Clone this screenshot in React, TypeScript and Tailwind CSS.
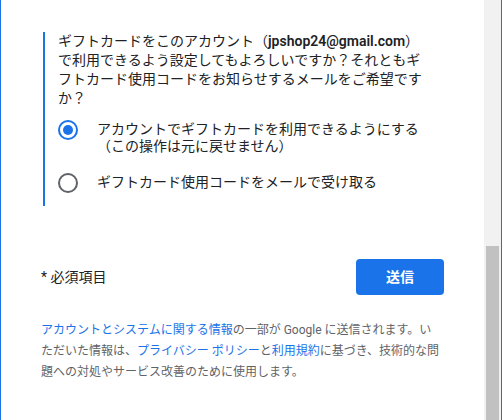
import { useState } from "react";

const font = "font-['Roboto','Noto_Sans_CJK_JP',sans-serif]";

export default function App() {
  const [choice, setChoice] = useState<string>("account");

  const options = [
    {
      key: "account",
      label: "アカウントでギフトカードを利用できるようにする",
      sub: "（この操作は元に戻せません）",
    },
    { key: "mail", label: "ギフトカード使用コードをメールで受け取る", sub: "" },
  ];

  return (
    <div className={`h-[420px] w-[502px] flex overflow-hidden border-x border-[#1a73e8] bg-white ${font}`}>
      {/* Form body */}
      <div className="flex-1 px-10 pt-8">
        {/* Question */}
        <div className="ml-[2px] border-l-2 border-[#1a73e8] pl-[13px] pr-[20px] pb-[13px]">
          <p className="text-[14px] leading-[19px] text-[#202124]">
            ギフトカードをこのアカウント（<span className="font-semibold">jpshop24@gmail.com</span>）で利用できるよう設定してもよろしいですか？それともギフトカード使用コードをお知らせするメールをご希望ですか？
          </p>
          <div className="mt-[13px] flex flex-col gap-[19px]">
            {options.map((opt) => {
              const active = choice === opt.key;
              return (
                <button
                  key={opt.key}
                  onClick={() => setChoice(opt.key)}
                  className="flex items-start gap-[19px] text-left"
                >
                  <span
                    className={`mt-[-1px] flex h-5 w-5 shrink-0 items-center justify-center rounded-full border-2 ${
                      active ? "border-[#1a73e8]" : "border-[#5f6368]"
                    }`}
                  >
                    {active && <span className="h-[10px] w-[10px] rounded-full bg-[#1a73e8]" />}
                  </span>
                  <span className="text-[14px] leading-[17px] text-[#202124]">
                    {opt.label}
                    {opt.sub && <span className="block">{opt.sub}</span>}
                  </span>
                </button>
              );
            })}
          </div>
        </div>

        {/* Submit row */}
        <div className="mt-[53px] flex items-center justify-between">
          <span className="text-[14px] text-[#202124]">* 必須項目</span>
          <button className="h-[36px] w-[88px] rounded bg-[#1a73e8] text-[14px] font-bold text-white">
            送信
          </button>
        </div>

        {/* Footer note */}
        <p className="mt-[25px] w-[400px] text-[12px] leading-[21px] text-[#5f6368]">
          <span className="text-[#1a73e8]">アカウントとシステムに関する情報</span>の一部が Google に送信されます。いただいた情報は、<span className="text-[#1a73e8]">プライバシー ポリシー</span>と<span className="text-[#1a73e8]">利用規約</span>に基づき、技術的な問題への対処やサービス改善のために使用します。
        </p>
      </div>

      {/* Scrollbar */}
      <div className="flex w-[17px] flex-col bg-[#f1f1f1] pt-[246px]">
        <div className="mx-[2px] flex-1 bg-[#c1c1c1]" />
      </div>
    </div>
  );
}
